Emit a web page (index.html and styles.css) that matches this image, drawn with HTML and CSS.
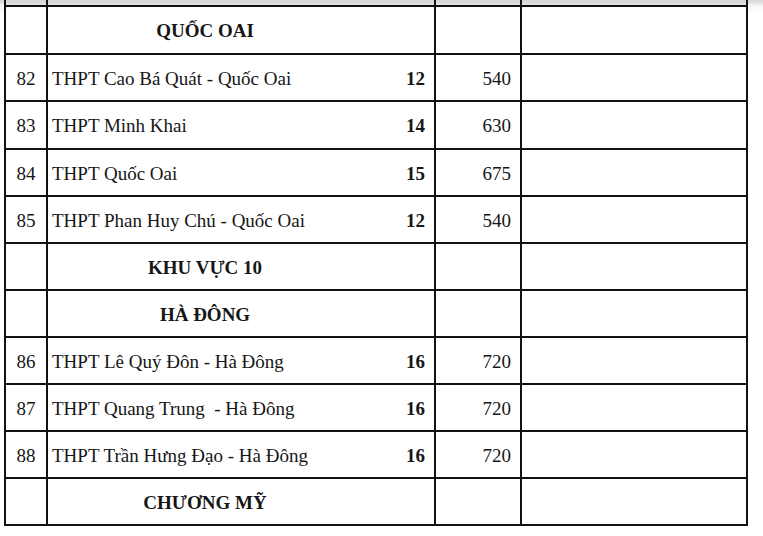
FILE: index.html
```html
<!DOCTYPE html>
<html lang="vi">
<head>
<meta charset="utf-8">
<title>Danh sách trường THPT</title>
<link rel="stylesheet" href="styles.css">
</head>
<body>
<div class="sheet">
  <div class="cell cut"></div><div class="cell cut"></div><div class="cell cut"></div><div class="cell cut"></div>

  <div class="cell"></div>
  <div class="cell main"><span class="name head">QUỐC OAI</span><span class="cls"></span></div>
  <div class="cell"></div><div class="cell"></div>

  <div class="cell idx">82</div>
  <div class="cell main"><span class="name">THPT Cao Bá Quát - Quốc Oai</span><span class="cls">12</span></div>
  <div class="cell num">540</div><div class="cell"></div>

  <div class="cell idx">83</div>
  <div class="cell main"><span class="name">THPT Minh Khai</span><span class="cls">14</span></div>
  <div class="cell num">630</div><div class="cell"></div>

  <div class="cell idx">84</div>
  <div class="cell main"><span class="name">THPT Quốc Oai</span><span class="cls">15</span></div>
  <div class="cell num">675</div><div class="cell"></div>

  <div class="cell idx">85</div>
  <div class="cell main"><span class="name">THPT Phan Huy Chú - Quốc Oai</span><span class="cls">12</span></div>
  <div class="cell num">540</div><div class="cell"></div>

  <div class="cell"></div>
  <div class="cell main"><span class="name head">KHU VỰC 10</span><span class="cls"></span></div>
  <div class="cell"></div><div class="cell"></div>

  <div class="cell"></div>
  <div class="cell main"><span class="name head">HÀ ĐÔNG</span><span class="cls"></span></div>
  <div class="cell"></div><div class="cell"></div>

  <div class="cell idx">86</div>
  <div class="cell main"><span class="name">THPT Lê Quý Đôn - Hà Đông</span><span class="cls">16</span></div>
  <div class="cell num">720</div><div class="cell"></div>

  <div class="cell idx">87</div>
  <div class="cell main"><span class="name">THPT Quang Trung&nbsp; - Hà Đông</span><span class="cls">16</span></div>
  <div class="cell num">720</div><div class="cell"></div>

  <div class="cell idx">88</div>
  <div class="cell main"><span class="name">THPT Trần Hưng Đạo - Hà Đông</span><span class="cls">16</span></div>
  <div class="cell num">720</div><div class="cell"></div>

  <div class="cell"></div>
  <div class="cell main"><span class="name head">CHƯƠNG MỸ</span><span class="cls"></span></div>
  <div class="cell"></div><div class="cell"></div>
</div>
</body>
</html>
```

FILE: styles.css
```css
html, body {
  margin: 0;
  padding: 0;
}
body {
  width: 763px;
  height: 536px;
  overflow: hidden;
  background: linear-gradient(to bottom, #d6d6d6 0, #e4e4e4 3px, #f6f6f6 6px, #fff 14px);
  font-family: "Liberation Serif", "Times New Roman", serif;
  font-size: 19px;
  color: #161616;
}
.sheet {
  margin-left: 4px;
  width: 740px;
  display: grid;
  grid-template-columns: 40px 386px 84px 224px;
  grid-template-rows: 5px 46px 45px 46px;
  grid-auto-rows: 45px;
  gap: 2px;
  padding: 0 2px 2px 2px;
  background: #111;
}
.cell {
  background: #fff;
  display: flex;
  align-items: center;
  padding-top: 2px;
  box-sizing: border-box;
}
.cell.cut {
  background: linear-gradient(to bottom, #d6d6d6 0, #e2e2e2 5px);
  padding: 0;
}
.idx {
  justify-content: center;
}
.main {
  display: flex;
}
.name {
  flex: 1;
  padding-left: 4px;
}
.name.head {
  text-align: center;
  font-weight: bold;
  padding-left: 0;
}
.cls {
  width: 72px;
  text-align: right;
  padding-right: 9px;
  box-sizing: border-box;
  font-weight: bold;
}
.num {
  justify-content: flex-end;
  padding-right: 9px;
}
```
